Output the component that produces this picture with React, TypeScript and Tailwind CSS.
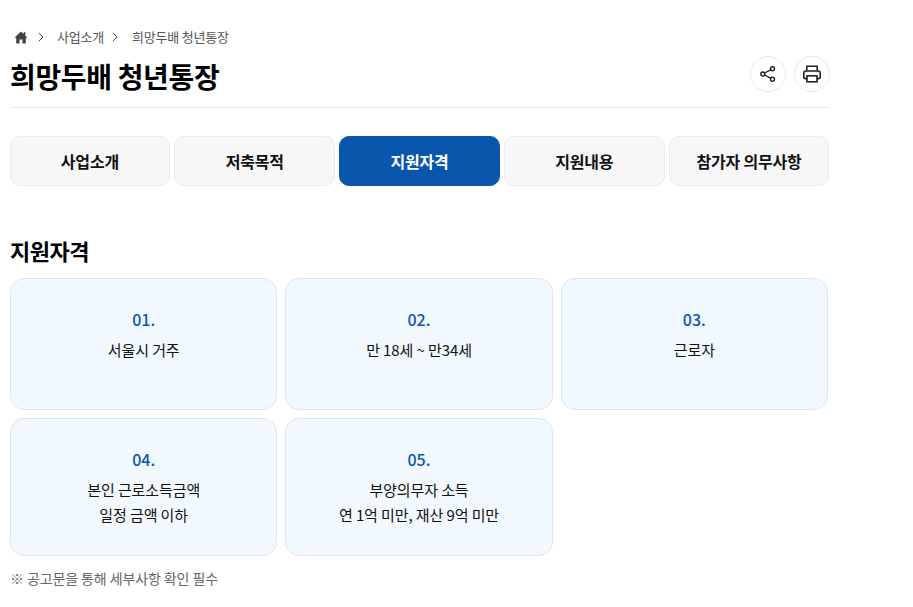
import { ChevronRight } from "lucide-react";

const tabs = ["사업소개", "저축목적", "지원자격", "지원내용", "참가자 의무사항"];

const cards = [
  { no: "01.", lines: ["서울시 거주"], h: "h-[132px]" },
  { no: "02.", lines: ["만 18세 ~ 만34세"], h: "h-[132px]" },
  { no: "03.", lines: ["근로자"], h: "h-[132px]" },
  { no: "04.", lines: ["본인 근로소득금액", "일정 금액 이하"], h: "h-[138px]" },
  { no: "05.", lines: ["부양의무자 소득", "연 1억 미만, 재산 9억 미만"], h: "h-[138px]" },
];

function HomeIcon() {
  return (
    <svg width="14" height="13" viewBox="0 0 14 13" fill="#444">
      <path d="M7 0.5 L9.6 3 V1.2 H11.4 V4.7 L13.6 6.8 H11.8 V12.5 H8.4 V8.5 H5.6 V12.5 H2.2 V6.8 H0.4 Z" />
    </svg>
  );
}

function ShareIcon() {
  return (
    <svg width="18" height="18" viewBox="0 0 18 18" fill="none" stroke="#222" strokeWidth="1.4">
      <circle cx="13.5" cy="3.8" r="2" />
      <circle cx="3.8" cy="9" r="2" />
      <circle cx="13.5" cy="14.2" r="2" />
      <path d="M5.6 8 L11.7 4.8 M5.6 10 L11.7 13.2" />
    </svg>
  );
}

function PrintIcon() {
  return (
    <svg width="20" height="20" viewBox="0 0 20 20" fill="none" stroke="#222" strokeWidth="1.6">
      <path d="M4.8 7 V2.2 H15.2 V7" />
      <rect x="1.8" y="7" width="16.4" height="7.6" rx="1.8" />
      <rect x="5" y="11.8" width="10" height="6" fill="#fff" />
    </svg>
  );
}

export default function App() {
  return (
    <div className="h-[607px] w-[913px] overflow-hidden bg-white pl-2.5 pt-[28px] font-['Noto_Sans_CJK_KR','Noto_Sans',sans-serif] text-black">
      <div className="w-[820px]">
        <div className="flex h-[18px] items-center text-[13px] tracking-[-0.2px] text-[#555]">
          <span className="ml-1 flex w-[14px]"><HomeIcon /></span>
          <ChevronRight className="ml-[5px] size-[16px] text-[#555]" strokeWidth={1.5} />
          <span className="ml-[8px]">사업소개</span>
          <ChevronRight className="ml-[3px] size-[16px] text-[#555]" strokeWidth={1.5} />
          <span className="ml-[9px]">희망두배 청년통장</span>
        </div>
        <div className="mt-[7px] flex h-[55px] items-start justify-between border-b border-[#e8e8e8]">
          <h1 className="text-[28px] leading-[46px] font-bold tracking-[-0.35px]">희망두배 청년통장</h1>
          <div className="mt-[3px] flex gap-2">
            <button className="flex size-9 items-center justify-center rounded-full border border-[#eaeaea] bg-white"><ShareIcon /></button>
            <button className="flex size-9 items-center justify-center rounded-full border border-[#eaeaea] bg-white"><PrintIcon /></button>
          </div>
        </div>
      </div>

      <div className="mt-7 -ml-[0.5px] flex w-[820px] gap-1">
        {tabs.map((t) => (
          <div
            key={t}
            className={
              t === "지원자격"
                ? "flex h-[50px] flex-1 items-center justify-center rounded-[10px] border border-[#0a56ad] bg-[#0a56ad] text-[16px] font-bold tracking-[-0.2px] text-white"
                : "flex h-[50px] flex-1 items-center justify-center rounded-[10px] border border-[#ebebeb] bg-[#f7f7f7] text-[16px] font-semibold tracking-[-0.2px] text-[#111]"
            }
          >
            {t}
          </div>
        ))}
      </div>

      <h2 className="mt-[45px] text-[22px] leading-[38px] font-bold tracking-[-0.5px]">지원자격</h2>

      <div className="mt-[9px] grid w-[818px] grid-cols-3 gap-2">
        {cards.map((c) => (
          <div key={c.no} className={`${c.h} rounded-[14px] border border-[#d9e8f5] bg-[#f1f8fe] pt-[27px] text-center`}>
            <p className="mb-[5px] text-[16px] leading-[26px] font-medium text-[#0a56ad]">{c.no}</p>
            {c.lines.map((l) => (
              <p key={l} className="text-[15px] leading-[25px] tracking-[-0.1px] text-[#111]">{l}</p>
            ))}
          </div>
        ))}
      </div>

      <p className="mt-[12px] text-[14px] leading-[20px] tracking-[-0.1px] text-[#666]">※ 공고문을 통해 세부사항 확인 필수</p>
    </div>
  );
}
